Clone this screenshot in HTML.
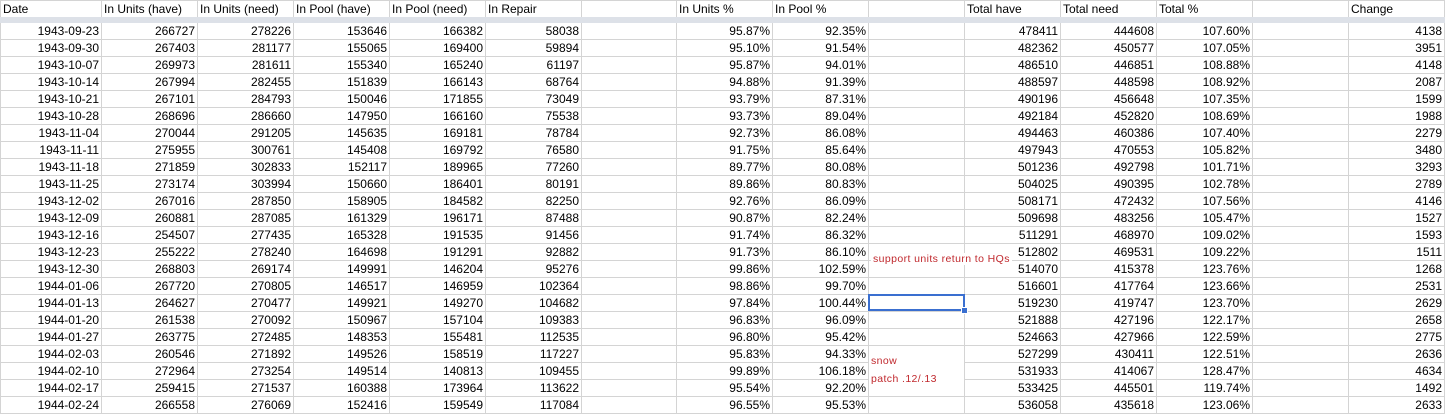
<!DOCTYPE html>
<html><head><style>
body{margin:0;background:#fff;width:1447px;height:416px;overflow:hidden;position:relative;font-family:"Liberation Sans",Arial,sans-serif;font-size:12px;color:#000}
table{border-collapse:collapse;table-layout:fixed;position:absolute;left:0;top:0}
td{border:1px solid #d4d4d4;padding:0 2px;white-space:nowrap;overflow:hidden;text-align:right;height:16px;line-height:16px}
tr.h td{text-align:left;height:16px;border-bottom:6px solid #dde1e8}
.a{position:absolute;color:#c0282d;font-size:10.5px;background:#fff;letter-spacing:0.4px;line-height:12px}
.sel{position:absolute;left:868px;top:294px;width:93px;height:13px;border:2px solid #3a6fd0}
.sel:after{content:"";position:absolute;right:-5px;bottom:-5px;width:5px;height:5px;background:#3a6fd0;border:1px solid #fff}
</style></head><body>
<table>
<colgroup><col style="width:101px"><col style="width:96px"><col style="width:96px"><col style="width:96px"><col style="width:96px"><col style="width:96px"><col style="width:95px"><col style="width:96px"><col style="width:96px"><col style="width:96px"><col style="width:96px"><col style="width:96px"><col style="width:96px"><col style="width:96px"><col style="width:96px"></colgroup>
<tr class="h"><td>Date</td><td>In Units (have)</td><td>In Units (need)</td><td>In Pool (have)</td><td>In Pool (need)</td><td>In Repair</td><td></td><td>In Units %</td><td>In Pool %</td><td></td><td>Total have</td><td>Total need</td><td>Total %</td><td></td><td>Change</td></tr>
<tr><td>1943-09-23</td><td>266727</td><td>278226</td><td>153646</td><td>166382</td><td>58038</td><td></td><td>95.87%</td><td>92.35%</td><td></td><td>478411</td><td>444608</td><td>107.60%</td><td></td><td>4138</td></tr>
<tr><td>1943-09-30</td><td>267403</td><td>281177</td><td>155065</td><td>169400</td><td>59894</td><td></td><td>95.10%</td><td>91.54%</td><td></td><td>482362</td><td>450577</td><td>107.05%</td><td></td><td>3951</td></tr>
<tr><td>1943-10-07</td><td>269973</td><td>281611</td><td>155340</td><td>165240</td><td>61197</td><td></td><td>95.87%</td><td>94.01%</td><td></td><td>486510</td><td>446851</td><td>108.88%</td><td></td><td>4148</td></tr>
<tr><td>1943-10-14</td><td>267994</td><td>282455</td><td>151839</td><td>166143</td><td>68764</td><td></td><td>94.88%</td><td>91.39%</td><td></td><td>488597</td><td>448598</td><td>108.92%</td><td></td><td>2087</td></tr>
<tr><td>1943-10-21</td><td>267101</td><td>284793</td><td>150046</td><td>171855</td><td>73049</td><td></td><td>93.79%</td><td>87.31%</td><td></td><td>490196</td><td>456648</td><td>107.35%</td><td></td><td>1599</td></tr>
<tr><td>1943-10-28</td><td>268696</td><td>286660</td><td>147950</td><td>166160</td><td>75538</td><td></td><td>93.73%</td><td>89.04%</td><td></td><td>492184</td><td>452820</td><td>108.69%</td><td></td><td>1988</td></tr>
<tr><td>1943-11-04</td><td>270044</td><td>291205</td><td>145635</td><td>169181</td><td>78784</td><td></td><td>92.73%</td><td>86.08%</td><td></td><td>494463</td><td>460386</td><td>107.40%</td><td></td><td>2279</td></tr>
<tr><td>1943-11-11</td><td>275955</td><td>300761</td><td>145408</td><td>169792</td><td>76580</td><td></td><td>91.75%</td><td>85.64%</td><td></td><td>497943</td><td>470553</td><td>105.82%</td><td></td><td>3480</td></tr>
<tr><td>1943-11-18</td><td>271859</td><td>302833</td><td>152117</td><td>189965</td><td>77260</td><td></td><td>89.77%</td><td>80.08%</td><td></td><td>501236</td><td>492798</td><td>101.71%</td><td></td><td>3293</td></tr>
<tr><td>1943-11-25</td><td>273174</td><td>303994</td><td>150660</td><td>186401</td><td>80191</td><td></td><td>89.86%</td><td>80.83%</td><td></td><td>504025</td><td>490395</td><td>102.78%</td><td></td><td>2789</td></tr>
<tr><td>1943-12-02</td><td>267016</td><td>287850</td><td>158905</td><td>184582</td><td>82250</td><td></td><td>92.76%</td><td>86.09%</td><td></td><td>508171</td><td>472432</td><td>107.56%</td><td></td><td>4146</td></tr>
<tr><td>1943-12-09</td><td>260881</td><td>287085</td><td>161329</td><td>196171</td><td>87488</td><td></td><td>90.87%</td><td>82.24%</td><td></td><td>509698</td><td>483256</td><td>105.47%</td><td></td><td>1527</td></tr>
<tr><td>1943-12-16</td><td>254507</td><td>277435</td><td>165328</td><td>191535</td><td>91456</td><td></td><td>91.74%</td><td>86.32%</td><td></td><td>511291</td><td>468970</td><td>109.02%</td><td></td><td>1593</td></tr>
<tr><td>1943-12-23</td><td>255222</td><td>278240</td><td>164698</td><td>191291</td><td>92882</td><td></td><td>91.73%</td><td>86.10%</td><td></td><td>512802</td><td>469531</td><td>109.22%</td><td></td><td>1511</td></tr>
<tr><td>1943-12-30</td><td>268803</td><td>269174</td><td>149991</td><td>146204</td><td>95276</td><td></td><td>99.86%</td><td>102.59%</td><td></td><td>514070</td><td>415378</td><td>123.76%</td><td></td><td>1268</td></tr>
<tr><td>1944-01-06</td><td>267720</td><td>270805</td><td>146517</td><td>146959</td><td>102364</td><td></td><td>98.86%</td><td>99.70%</td><td></td><td>516601</td><td>417764</td><td>123.66%</td><td></td><td>2531</td></tr>
<tr><td>1944-01-13</td><td>264627</td><td>270477</td><td>149921</td><td>149270</td><td>104682</td><td></td><td>97.84%</td><td>100.44%</td><td></td><td>519230</td><td>419747</td><td>123.70%</td><td></td><td>2629</td></tr>
<tr><td>1944-01-20</td><td>261538</td><td>270092</td><td>150967</td><td>157104</td><td>109383</td><td></td><td>96.83%</td><td>96.09%</td><td></td><td>521888</td><td>427196</td><td>122.17%</td><td></td><td>2658</td></tr>
<tr><td>1944-01-27</td><td>263775</td><td>272485</td><td>148353</td><td>155481</td><td>112535</td><td></td><td>96.80%</td><td>95.42%</td><td></td><td>524663</td><td>427966</td><td>122.59%</td><td></td><td>2775</td></tr>
<tr><td>1944-02-03</td><td>260546</td><td>271892</td><td>149526</td><td>158519</td><td>117227</td><td></td><td>95.83%</td><td>94.33%</td><td></td><td>527299</td><td>430411</td><td>122.51%</td><td></td><td>2636</td></tr>
<tr><td>1944-02-10</td><td>272964</td><td>273254</td><td>149514</td><td>140813</td><td>109455</td><td></td><td>99.89%</td><td>106.18%</td><td></td><td>531933</td><td>414067</td><td>128.47%</td><td></td><td>4634</td></tr>
<tr><td>1944-02-17</td><td>259415</td><td>271537</td><td>160388</td><td>173964</td><td>113622</td><td></td><td>95.54%</td><td>92.20%</td><td></td><td>533425</td><td>445501</td><td>119.74%</td><td></td><td>1492</td></tr>
<tr><td>1944-02-24</td><td>266558</td><td>276069</td><td>152416</td><td>159549</td><td>117084</td><td></td><td>96.55%</td><td>95.53%</td><td></td><td>536058</td><td>435618</td><td>123.06%</td><td></td><td>2633</td></tr>
</table>
<div class="a" style="left:871px;top:253px;padding:0 2px">support units return to HQs</div>
<div class="a" style="left:869px;top:346px;width:95px;height:40px;padding:9px 2px 0;box-sizing:border-box">snow<br><span style="display:block;margin-top:6px">patch .12/.13</span></div>
<div class="sel"></div>
</body></html>
